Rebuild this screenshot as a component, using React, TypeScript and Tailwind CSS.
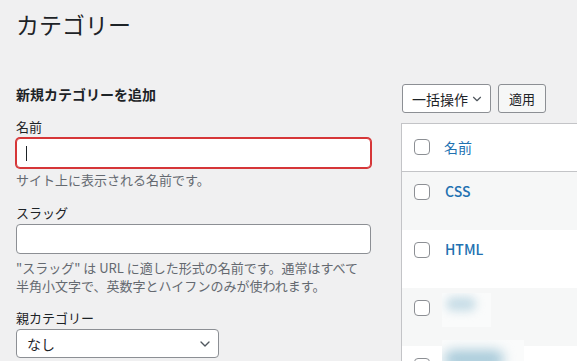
import React from 'react';
import { ChevronDown } from 'lucide-react';

const Checkbox: React.FC = () => (
  <span className="block w-4 h-4 shrink-0 rounded-[4px] border border-[#8c8f94] bg-white" />
);

interface RowProps {
  name?: string;
  striped?: boolean;
  blur?: 'short' | 'long';
}

const CategoryRow: React.FC<RowProps> = ({ name, striped, blur }) => (
  <div className={`relative flex h-[58px] pl-3 pt-3 ${striped ? 'bg-[#f6f7f7]' : 'bg-white'}`}>
    <Checkbox />
    {name && (
      <span className="ml-[15px] -mt-[3px] text-[14px] leading-[20px] font-medium text-[#2271b1]">
        {name}
      </span>
    )}
    {blur === 'short' && (
      <div className="absolute left-[40px] top-[5px] w-[49px] h-[34px] overflow-hidden bg-[#fafbfb]">
        <div className="absolute left-[4px] top-[4px] w-[30px] h-[14px] rounded-full bg-[#c6dce6] blur-[5px]" />
      </div>
    )}
    {blur === 'long' && (
      <div className="absolute left-[40px] -top-[6px] w-[82px] h-[40px] overflow-hidden bg-[#fafbfb]">
        <div className="absolute left-[2px] top-[10px] w-[60px] h-[18px] rounded-full bg-[#a9cbda] blur-[6px]" />
      </div>
    )}
  </div>
);

export default function App() {
  return (
    <div className="w-[577px] h-[361px] overflow-hidden bg-[#f0f0f1] pl-4 text-[#1d2327] font-[family-name:'Noto_Sans_CJK_JP','Noto_Sans',sans-serif]">
      <h1 className="pt-[9px] text-[23px] leading-[30px] font-normal">カテゴリー</h1>

      <div className="flex mt-[45px]">
        {/* Add new category form */}
        <div className="w-[355px] shrink-0">
          <h2 className="text-[14px] leading-[20px] font-bold">新規カテゴリーを追加</h2>

          <label className="block mt-[14px] text-[13px] leading-[18px]">名前</label>
          <div className="mt-[2px] h-[30px] rounded-[4px] border border-[#d63638] bg-white shadow-[0_0_0_1px_#d63638] flex items-center pl-[9px]">
            <span className="block w-px h-[15px] bg-[#1d2327]" />
          </div>
          <p className="mt-[3px] text-[13px] leading-[18px] text-[#646970]">サイト上に表示される名前です。</p>

          <label className="block mt-[15px] text-[13px] leading-[18px]">スラッグ</label>
          <div className="mt-[2px] h-[30px] rounded-[4px] border border-[#8c8f94] bg-white" />
          <p className="mt-[5px] text-[13px] leading-[18px] text-[#646970]">
            <span className="block">"スラッグ" は URL に適した形式の名前です。通常はすべて</span>
            <span className="block">半角小文字で、英数字とハイフンのみが使われます。</span>
          </p>

          <label className="block mt-[14px] text-[13px] leading-[18px]">親カテゴリー</label>
          <div className="mt-[2px] w-[203px] h-[29px] rounded-[4px] border border-[#8c8f94] bg-white flex items-center justify-between pl-[10px] pr-[5px]">
            <span className="text-[14px] leading-[20px]">なし</span>
            <ChevronDown size={16} strokeWidth={2} className="text-[#50575e]" />
          </div>
        </div>

        {/* Category list */}
        <div className="ml-[30px] flex-1 min-w-0">
          <div className="flex items-center gap-[7px] ml-px">
            <div className="w-[89px] h-[29px] rounded-[3px] border border-[#8c8f94] bg-white flex items-center justify-between pl-[9px] pr-[6px]">
              <span className="text-[14px] leading-[20px]">一括操作</span>
              <ChevronDown size={14} strokeWidth={2} className="text-[#50575e]" />
            </div>
            <button className="w-[48px] h-[29px] rounded-[3px] border border-[#8c8f94] bg-[#f6f7f7] text-[13px] leading-[18px]">
              適用
            </button>
          </div>

          <div className="mt-[10px] w-[200px] border-l border-t border-[#c3c4c7]">
            <div className="flex items-center h-[48px] pl-3 pb-[2px] bg-white border-b border-[#c3c4c7]">
              <Checkbox />
              <span className="ml-[14px] text-[14px] leading-[20px] text-[#2271b1]">名前</span>
            </div>
            <CategoryRow name="CSS" striped />
            <CategoryRow name="HTML" />
            <CategoryRow striped blur="short" />
            <CategoryRow blur="long" />
          </div>
        </div>
      </div>
    </div>
  );
}
